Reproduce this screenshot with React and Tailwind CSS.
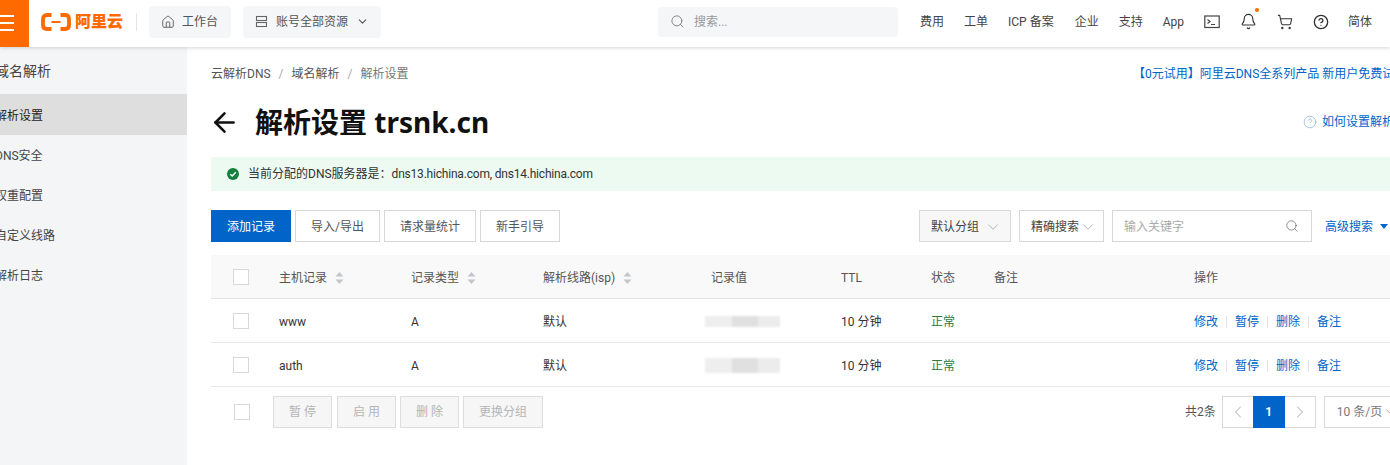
import React from "react";
import { Search, ChevronDown, ChevronLeft, ChevronRight, ArrowLeft, Bell, ShoppingCart, CircleHelp, Home } from "lucide-react";

const font = { fontFamily: 'Roboto,"Noto Sans CJK SC",sans-serif' };
const titleFont = { fontFamily: '"Noto Sans","Noto Sans CJK SC",sans-serif' };
const rowGrid = "grid grid-cols-[68px_132px_132px_168px_130px_90px_63px_200px_240px] items-center [&>*:not(:first-child)]:pt-[2px]";

function Sort() {
  return (
    <svg width="9" height="14" viewBox="0 0 9 14" className="ml-[8px] shrink-0">
      <path d="M4.5 1 L8.5 5.5 H0.5 Z" fill="#c4c6cc" />
      <path d="M4.5 13 L8.5 8.5 H0.5 Z" fill="#c4c6cc" />
    </svg>
  );
}

function Check({ className = "" }) {
  return <span className={"block w-4 h-4 border border-[#d7d8d9] bg-white " + className} />;
}

function Ops() {
  const items = ["修改", "暂停", "删除", "备注"];
  return (
    <div className="flex items-center text-[#0064c8] whitespace-nowrap">
      {items.map((t, i) => (
        <React.Fragment key={t}>
          {i > 0 && <span className="w-px h-3 bg-[#e3e4e6] mx-2" />}
          <span>{t}</span>
        </React.Fragment>
      ))}
    </div>
  );
}

function Blur({ tall }) {
  return (
    <div className={"flex w-[75px] ml-[-6px] blur-[1px] " + (tall ? "h-[15px]" : "h-[11px]")}>
      <div className="w-[27px] bg-[#eeeeee]" />
      <div className="w-[26px] bg-[#e0e0e0]" />
      <div className="w-[22px] bg-[#ececec]" />
    </div>
  );
}

function Row({ host, tall }) {
  return (
    <div className={rowGrid + " h-11 border-b border-[#e8e9ea] text-[#333]"}>
      <div className="pl-[22px]"><Check /></div>
      <div>{host}</div>
      <div>A</div>
      <div>默认</div>
      <div><Blur tall={tall} /></div>
      <div>10 分钟</div>
      <div className="text-[#2a7d3c]">正常</div>
      <div />
      <Ops />
    </div>
  );
}

function OutlineBtn({ children, className = "" }) {
  return (
    <button className={"h-8 pt-[2px] border border-[#d7d8d9] bg-white text-[#555] flex items-center justify-center " + className}>
      {children}
    </button>
  );
}

function DisabledBtn({ children, className = "" }) {
  return (
    <button className={"h-8 border border-[#dcdddf] bg-[#f6f6f6] text-[#b4b5b7] flex items-center justify-center " + className}>
      {children}
    </button>
  );
}

export default function App() {
  return (
    <div style={font} className="w-[1390px] h-[465px] overflow-hidden bg-white text-xs text-[#333] flex flex-col">
      <header className="relative z-10 h-[47px] shrink-0 flex items-stretch bg-white shadow-[0_1px_4px_rgba(0,0,0,0.16)]">
        <div className="w-[29px] bg-[#ff6a00] flex flex-col justify-center gap-[5px] pb-[2px] shrink-0">
          <span className="block w-[14px] h-[2px] bg-white" />
          <span className="block w-[14px] h-[2px] bg-white" />
          <span className="block w-[14px] h-[2px] bg-white" />
        </div>
        <div className="flex-1 flex items-center pb-[4px]">
          <svg width="30" height="18" viewBox="0 0 30 18" className="ml-[12px] shrink-0">
            <path d="M10.5 2 H6 Q2 2 2 6 V12 Q2 16 6 16 H10.5" fill="none" stroke="#ff6a00" strokeWidth="3.8" />
            <path d="M19.5 2 H24 Q28 2 28 6 V12 Q28 16 24 16 H19.5" fill="none" stroke="#ff6a00" strokeWidth="3.8" />
            <rect x="10.5" y="8" width="9" height="2" fill="#ff6a00" />
          </svg>
          <span className="ml-[4px] text-[16px] leading-none font-black text-[#ff6a00] whitespace-nowrap w-[50px]">阿里云</span>
          <span className="ml-[11px] w-px h-[18px] bg-[#e3e4e6]" />
          <div className="ml-[12px] w-[82px] h-[32px] bg-[#f5f6f7] rounded-sm flex items-center pl-[12px] gap-[7px] text-[#555]">
            <Home size={14} strokeWidth={1.5} />
            <span>工作台</span>
          </div>
          <div className="ml-[12px] w-[138px] h-[32px] bg-[#f5f6f7] rounded-sm flex items-center pl-[12px] text-[#555]">
            <svg width="13" height="13" viewBox="0 0 13 13" fill="none" stroke="#666" strokeWidth="1.1">
              <rect x="1.5" y="1.5" width="10" height="4" />
              <rect x="1.5" y="7.5" width="10" height="4" />
            </svg>
            <span className="ml-[8px]">账号全部资源</span>
            <ChevronDown size={13} className="ml-[8px]" />
          </div>
          <div className="ml-[277px] w-[240px] h-[30px] bg-[#f5f6f7] rounded-sm flex items-center pl-[12px] text-[#999]">
            <Search size={15} strokeWidth={1.4} className="text-[#777]" />
            <span className="ml-[9px]">搜索...</span>
          </div>
          <nav className="ml-[22px] flex items-center text-[#444] whitespace-nowrap">
            <span>费用</span>
            <span className="ml-[20px]">工单</span>
            <span className="ml-[20px]">ICP 备案</span>
            <span className="ml-[21px]">企业</span>
            <span className="ml-[20px]">支持</span>
            <span className="ml-[20px]">App</span>
            <svg width="16" height="14" viewBox="0 0 16 14" fill="none" stroke="#444" strokeWidth="1.2" className="ml-[20px]">
              <rect x="0.8" y="1" width="14.4" height="11.5" />
              <path d="M3.5 4.5 L6 6.5 L3.5 8.5 M7 9.5 H11" />
            </svg>
            <span className="relative ml-[20px] block">
              <Bell size={17} strokeWidth={1.6} className="text-[#333]" />
              <span className="absolute -top-[5px] right-[-2px] w-[4px] h-[4px] rounded-full bg-[#ff6a00]" />
            </span>
            <ShoppingCart size={16} strokeWidth={1.6} className="ml-[20px] text-[#333]" />
            <CircleHelp size={16} strokeWidth={2} className="ml-[20px] text-[#333]" />
            <span className="ml-[19px]">简体</span>
          </nav>
        </div>
      </header>

      <div className="flex flex-1 min-h-0">
        <aside className="w-[187px] shrink-0 bg-[#f4f5f6] pt-[4px] overflow-hidden">
          <div className="h-10 mb-[3px] flex items-center text-[#444] text-sm">
            <span className="whitespace-nowrap ml-[-5px]">域名解析</span>
          </div>
          <div className="h-[41px] pt-[2px] flex items-center bg-[#dedede] text-[#222]">
            <span className="whitespace-nowrap ml-[-5px]">解析设置</span>
          </div>
          {["DNS安全", "权重配置", "自定义线路", "解析日志"].map((t) => (
            <div key={t} className="h-10 pt-[2px] flex items-center text-[#444]">
              <span className="whitespace-nowrap ml-[-5px]">{t}</span>
            </div>
          ))}
        </aside>

        <main className="flex-1 min-w-0 pl-6 overflow-hidden">
          <div className="w-[1240px]">
            <div className="flex items-center justify-between h-[18px] mt-[18px] text-[#555] whitespace-nowrap">
              <div className="flex items-center">
                <span>云解析DNS</span>
                <span className="mx-[8px] text-[#aaa]">/</span>
                <span>域名解析</span>
                <span className="mx-[8px] text-[#aaa]">/</span>
                <span className="text-[#777]">解析设置</span>
              </div>
              <span className="text-[#0064c8] absolute left-[1133px]">【0元试用】阿里云DNS全系列产品 新用户免费试用</span>
            </div>

            <div className="flex items-center h-[40px] mt-[19px] relative">
              <ArrowLeft size={31} strokeWidth={2} className="text-[#111] ml-[-2px]" />
              <h1 style={titleFont} className="ml-[15px] text-[28px] leading-none font-bold text-[#111] whitespace-nowrap">解析设置 trsnk.cn</h1>
              <div className="absolute left-[1092px] top-[12px] flex items-center text-[#0064c8] whitespace-nowrap">
                <CircleHelp size={14} strokeWidth={1} className="text-[#6a9fd4]" />
                <span className="ml-[5px]">如何设置解析</span>
              </div>
            </div>

            <div className="h-[34px] mt-[15px] bg-[#edfaf1] flex items-center pl-[16px]">
              <svg width="12" height="12" viewBox="0 0 12 12">
                <circle cx="6" cy="6" r="6" fill="#15803d" />
                <path d="M3.2 6.2 L5.2 8 L8.8 4.2" fill="none" stroke="#fff" strokeWidth="1.4" />
              </svg>
              <span className="ml-[9px] text-[#333]">当前分配的DNS服务器是：<span className="tracking-[-0.2px]">dns13.hichina.com, dns14.hichina.com</span></span>
            </div>

            <div className="flex items-center h-[32px] mt-[19px]">
              <button className="w-[80px] h-8 pt-[2px] bg-[#0064c8] text-white">添加记录</button>
              <OutlineBtn className="w-[85px] ml-[4px]">导入/导出</OutlineBtn>
              <OutlineBtn className="w-[92px] ml-[4px]">请求量统计</OutlineBtn>
              <OutlineBtn className="w-[80px] ml-[4px]">新手引导</OutlineBtn>
              <div className="ml-[359px] w-[92px] h-8 pt-[2px] border border-[#d7d8d9] bg-[#f7f7f7] flex items-center pl-[11px] text-[#444]">
                <span>默认分组</span>
                <ChevronDown size={18} strokeWidth={0.8} className="ml-[5px] text-[#888]" />
              </div>
              <div className="ml-[8px] w-[85px] h-8 pt-[2px] border border-[#d7d8d9] flex items-center pl-[11px] text-[#444]">
                <span>精确搜索</span>
                <ChevronDown size={18} strokeWidth={0.8} className="text-[#888]" />
              </div>
              <div className="ml-[8px] w-[200px] h-8 pt-[2px] border border-[#d7d8d9] flex items-center justify-between pl-[11px] pr-[12px] text-[#aaa]">
                <span>输入关键字</span>
                <Search size={14} strokeWidth={1.1} className="text-[#555] mb-[2px]" />
              </div>
              <span className="ml-[13px] pt-[2px] text-[#0064c8] whitespace-nowrap">高级搜索</span>
              <svg width="8" height="5" viewBox="0 0 8 5" className="ml-[7px] shrink-0">
                <path d="M0 0 H8 L4 5 Z" fill="#0064c8" />
              </svg>
            </div>

            <div className="mt-[13px]">
              <div className={rowGrid + " h-11 bg-[#f9f9f9] border-b border-[#e3e4e6] text-[#555]"}>
                <div className="pl-[22px]"><Check /></div>
                <div className="flex items-center">主机记录<Sort /></div>
                <div className="flex items-center">记录类型<Sort /></div>
                <div className="flex items-center">解析线路(isp)<Sort /></div>
                <div>记录值</div>
                <div>TTL</div>
                <div>状态</div>
                <div>备注</div>
                <div>操作</div>
              </div>
              <Row host="www" />
              <Row host="auth" tall />
            </div>

            <div className="flex items-center mt-[9px] h-[32px]">
              <Check className="ml-[23px]" />
              <DisabledBtn className="ml-[23px] w-[59px]">暂 停</DisabledBtn>
              <DisabledBtn className="ml-[5px] w-[59px]">启 用</DisabledBtn>
              <DisabledBtn className="ml-[4px] w-[59px]">删 除</DisabledBtn>
              <DisabledBtn className="ml-[4px] w-[80px]">更换分组</DisabledBtn>
              <span className="ml-[642px] text-[#555]">共2条</span>
              <div className="ml-[6px] h-8 w-[94px] border border-[#d7d8d9] flex items-center">
                <span className="w-[30px] flex justify-center text-[#999]"><ChevronLeft size={20} strokeWidth={1} /></span>
                <span className="w-8 h-8 shrink-0 bg-[#0064c8] text-white font-bold flex items-center justify-center">1</span>
                <span className="w-[30px] flex justify-center text-[#999]"><ChevronRight size={20} strokeWidth={1} /></span>
              </div>
              <div className="ml-[8px] h-8 w-[80px] border border-[#d7d8d9] flex items-center pl-[12px] text-[#777] whitespace-nowrap">
                <span>10 条/页</span>
                <ChevronDown size={18} strokeWidth={0.8} />
              </div>
            </div>
          </div>
        </main>
      </div>
    </div>
  );
}
